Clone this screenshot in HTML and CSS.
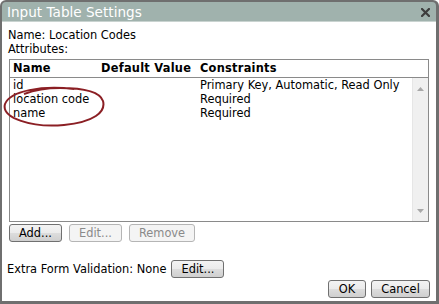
FILE: index.html
```
<!DOCTYPE html>
<html>
<head>
<meta charset="utf-8">
<link rel="stylesheet" href="styles.css">
</head>
<body>
<div class="dialog">
  <div class="titlebar">
    <span class="title">Input Table Settings</span>
    <svg class="close" width="9" height="9" viewBox="0 0 9 9"><path d="M1 1L8 8M8 1L1 8" stroke="#3d3d3d" stroke-width="2.2" stroke-linecap="square"/></svg>
  </div>
  <div class="content">
    <div class="line">Name: Location Codes</div>
    <div class="line">Attributes:</div>
    <div class="table">
      <div class="thead">
        <div class="cell">Name</div>
        <div class="cell">Default Value</div>
        <div class="cell">Constraints</div>
      </div>
      <div class="tbody">
        <div class="rows">
          <div class="row"><div class="cell">id</div><div class="cell"></div><div class="cell">Primary Key, Automatic, Read Only</div></div>
          <div class="row"><div class="cell">location code</div><div class="cell"></div><div class="cell">Required</div></div>
          <div class="row"><div class="cell">name</div><div class="cell"></div><div class="cell">Required</div></div>
        </div>
        <div class="scrollbar">
          <svg width="7" height="4" viewBox="0 0 7 4"><path d="M0 4L3.5 0L7 4Z" fill="#a8a8a8"/></svg>
          <svg width="7" height="4" viewBox="0 0 7 4"><path d="M0 0L3.5 4L7 0Z" fill="#a8a8a8"/></svg>
        </div>
      </div>
    </div>
    <div class="btnrow">
      <button class="btn w52">Add...</button>
      <button class="btn w52" disabled>Edit...</button>
      <button class="btn w66" disabled>Remove</button>
    </div>
    <div class="extra">
      <span>Extra Form Validation: None</span>
      <button class="btn w52">Edit...</button>
    </div>
    <div class="footer">
      <button class="btn w37">OK</button>
      <button class="btn w58">Cancel</button>
    </div>
  </div>
  <svg class="annot" width="106" height="44" viewBox="0 0 106 44"><path d="M72 3 C40 -1 8 5 3 18 C-1 32 30 42 62 39 C92 36 104 26 101 15 C98 6 82 2 58 2 C44 2 30 5 22 8" fill="none" stroke="#8b1f24" stroke-width="2"/></svg>
</div>
</body>
</html>
```
FILE: styles.css
```
* { box-sizing: border-box; }
html, body { margin: 0; padding: 0; background: #ffffff; }
body { font-family: "DejaVu Sans", Verdana, sans-serif; font-size: 11.4px; color: #000; }
.dialog {
  position: relative;
  width: 439px;
  height: 304px;
  background: #6f6f6f;
  border-radius: 6px 6px 0 0;
  padding: 2px 3px 3px 2px;
  display: flex;
  flex-direction: column;
}
.titlebar {
  height: 20px;
  background: #a0b2ad;
  border-radius: 4px 4px 0 0;
  display: flex;
  align-items: center;
  justify-content: space-between;
  padding: 0 5px 0 5px;
  border-bottom: 1px solid #c9d3d0;
}
.title { color: #fff; font-size: 13.6px; }
.close { margin-top: 1px; margin-right: 1px; }
.content {
  flex: 1;
  background: #fff;
  padding: 6px 6px 0 5px;
  display: flex;
  flex-direction: column;
}
.line { height: 14px; line-height: 14px; padding-left: 1px; }
.table {
  margin-top: 3px;
  margin-left: 2px;
  width: 420px;
  height: 163px;
  border: 1px solid #8a8a8a;
  display: flex;
  flex-direction: column;
}
.thead {
  height: 18px;
  display: grid;
  grid-template-columns: 88px 99px 1fr;
  border-bottom: 1px solid #8a8a8a;
  font-weight: bold;
  letter-spacing: 0.25px;
  line-height: 16px;
  flex: none;
}
.cell { padding-left: 3px; white-space: nowrap; }
.tbody { flex: 1; display: flex; }
.rows { flex: 1; }
.row {
  display: grid;
  grid-template-columns: 88px 99px 1fr;
  height: 14px;
  line-height: 14px;
}
.scrollbar {
  width: 16px;
  background: #f0f0f0;
  border-left: 1px solid #e6e6e6;
  display: flex;
  flex-direction: column;
  justify-content: space-between;
  align-items: center;
  padding: 9px 0 8px;
}
.btnrow { display: flex; gap: 7px; margin-top: 2px; margin-left: 2px; }
.btn {
  font-family: inherit;
  font-size: 11.4px;
  height: 18px;
  padding: 0;
  border: 1px solid #707070;
  border-radius: 3px;
  background: linear-gradient(#f3f3f3, #ebebeb 50%, #dddddd 50%, #cfcfcf);
  color: #000;
  line-height: 15px;
}
.btn:disabled {
  border-color: #b5b5b5;
  background: #f4f4f4;
  color: #8a8a8a;
}
.w52 { width: 53px; }
.w66 { width: 66px; }
.w37 { width: 38px; }
.w58 { width: 59px; }
.extra {
  margin-top: 18px;
  display: flex;
  align-items: center;
  gap: 5px;
}
.footer {
  margin-top: 2px;
  display: flex;
  justify-content: flex-end;
  gap: 5px;
}
.annot { position: absolute; left: 2px; top: 86px; }
```
